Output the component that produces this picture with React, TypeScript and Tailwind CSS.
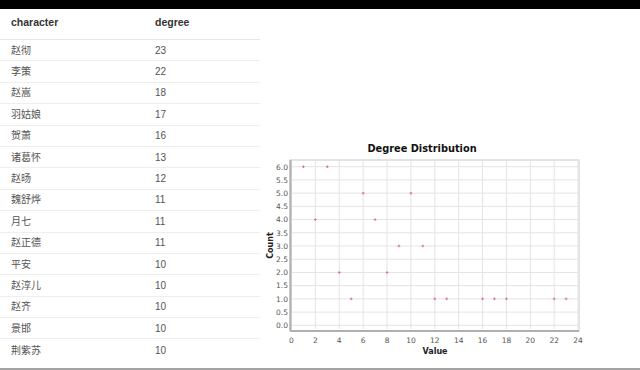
const rows: [string, number][] = [
  ["赵彻", 23],
  ["李策", 22],
  ["赵嵩", 18],
  ["羽姑娘", 17],
  ["贺萧", 16],
  ["诸葛怀", 13],
  ["赵旸", 12],
  ["魏舒烨", 11],
  ["月七", 11],
  ["赵正德", 11],
  ["平安", 10],
  ["赵淳儿", 10],
  ["赵齐", 10],
  ["景邯", 10],
  ["荆紫苏", 10],
];

const points: [number, number][] = [
  [1, 6], [2, 4], [3, 6], [4, 2], [5, 1], [6, 5], [7, 4], [8, 2], [9, 3],
  [10, 5], [11, 3], [12, 1], [13, 1], [16, 1], [17, 1], [18, 1], [22, 1], [23, 1],
];

const sx = (v: number) => 31.5 + v * 11.94;
const sy = (v: number) => 195.3 - v * 26.43;

function DegreeChart() {
  const xTicks = Array.from({ length: 13 }, (_, i) => i * 2);
  const yTicks = Array.from({ length: 13 }, (_, i) => i * 0.5);
  return (
    <svg width="330" height="232" viewBox="0 0 330 232" style={{ fontFamily: "'DejaVu Sans', Tahoma, sans-serif" }}>
      <text x="162" y="22" textAnchor="middle" fontSize="9.8" fontWeight="bold" fill="#111">
        Degree Distribution
      </text>
      <rect x="30" y="30" width="289" height="171" fill="#fff" stroke="#c8c8c8" />
      {xTicks.map((t) => (
        <line key={"gx" + t} x1={sx(t)} x2={sx(t)} y1="30" y2="199" stroke="#e4e4e4" strokeWidth="1" />
      ))}
      {yTicks.map((t) => (
        <line key={"gy" + t} x1="31" x2="319" y1={sy(t)} y2={sy(t)} stroke="#e4e4e4" strokeWidth="1" />
      ))}
      <line x1="30.5" x2="30.5" y1="30" y2="201" stroke="#b0b0b0" strokeWidth="2" />
      <line x1="30" x2="319" y1="201" y2="201" stroke="#b0b0b0" strokeWidth="2" />
      {yTicks.map((t) => (
        <text key={"ly" + t} x="28" y={sy(t) + 2.8} textAnchor="end" fontSize="7.5" fill="#555">
          {t.toFixed(1)}
        </text>
      ))}
      {xTicks.map((t) => (
        <text key={"lx" + t} x={sx(t)} y="213" textAnchor="middle" fontSize="7.5" fill="#555">
          {t}
        </text>
      ))}
      {points.map(([x, y]) => (
        <g key={x} stroke="#e0667a" strokeWidth="0.9">
          <line x1={sx(x) - 1.3} x2={sx(x) + 1.3} y1={sy(y)} y2={sy(y)} />
          <line x1={sx(x)} x2={sx(x)} y1={sy(y) - 1.3} y2={sy(y) + 1.3} />
        </g>
      ))}
      <text x="175" y="224" textAnchor="middle" fontSize="8" fontWeight="bold" fill="#222">
        Value
      </text>
      <text
        x="0"
        y="0"
        transform="translate(13 115.5) rotate(-90)"
        textAnchor="middle"
        fontSize="8"
        fontWeight="bold"
        fill="#222"
      >
        Count
      </text>
    </svg>
  );
}

export default function App() {
  return (
    <div
      className="flex h-[370px] w-[640px] flex-col overflow-hidden border-b-2 border-[#a3a3a3] bg-white"
      style={{ fontFamily: "'Liberation Sans', 'Noto Sans CJK SC', sans-serif" }}
    >
      <div className="h-[9px] shrink-0 bg-black" />
      <div className="flex flex-1">
        <div className="w-[260px] shrink-0">
          <div className="flex h-[31px] items-center border-b border-[#e6e6e6] pb-[2px] text-[10.5px] font-bold text-[#333]">
            <div className="w-[155px] pl-[11px]">character</div>
            <div>degree</div>
          </div>
          {rows.map(([name, deg]) => (
            <div
              key={name}
              className="flex h-[21.4px] items-center border-b border-[#eeeeee] text-[10px] text-[#555] last:border-b-0"
            >
              <div className="w-[155px] pl-[11px]">{name}</div>
              <div>{deg}</div>
            </div>
          ))}
        </div>
        <div className="flex-1 pt-[121px]">
          <DegreeChart />
        </div>
      </div>
    </div>
  );
}
